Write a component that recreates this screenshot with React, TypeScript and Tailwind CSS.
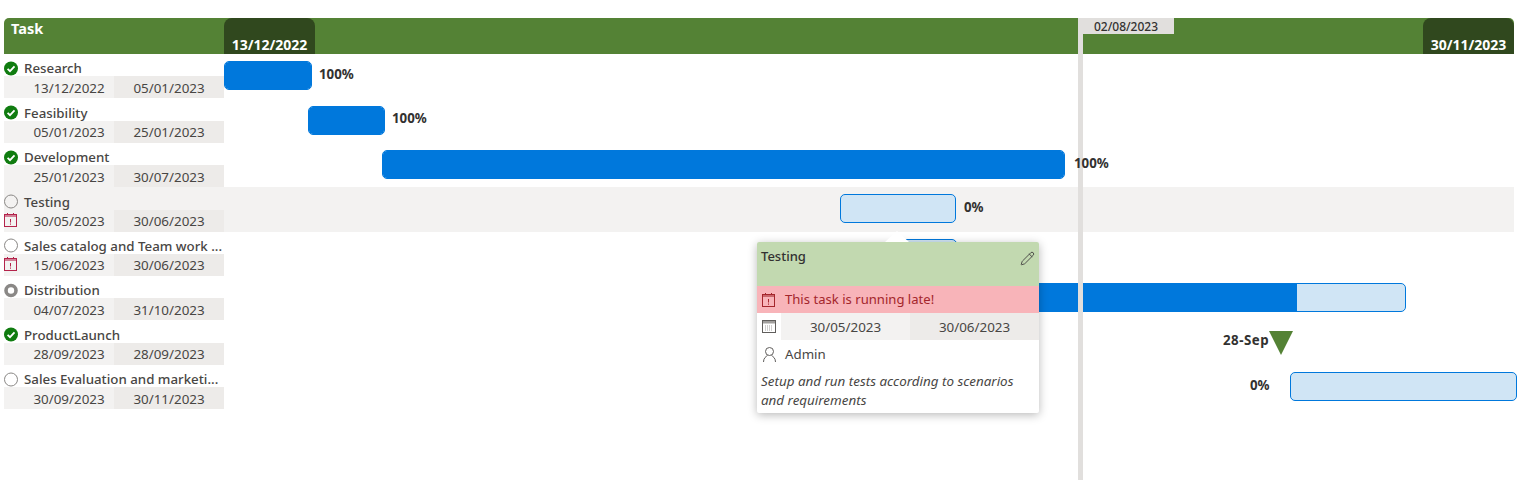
import { Pencil } from "lucide-react"

interface Task {
  name: string
  start: string
  end: string
  status: "done" | "todo" | "progress"
  late?: boolean
}

const tasks: Task[] = [
  { name: "Research", start: "13/12/2022", end: "05/01/2023", status: "done" },
  { name: "Feasibility", start: "05/01/2023", end: "25/01/2023", status: "done" },
  { name: "Development", start: "25/01/2023", end: "30/07/2023", status: "done" },
  { name: "Testing", start: "30/05/2023", end: "30/06/2023", status: "todo", late: true },
  { name: "Sales catalog and Team work ...", start: "15/06/2023", end: "30/06/2023", status: "todo", late: true },
  { name: "Distribution", start: "04/07/2023", end: "31/10/2023", status: "progress" },
  { name: "ProductLaunch", start: "28/09/2023", end: "28/09/2023", status: "done" },
  { name: "Sales Evaluation and marketi...", start: "30/09/2023", end: "30/11/2023", status: "todo" },
]

function StatusIcon({ status }: { status: Task["status"] }) {
  if (status === "done") {
    return (
      <svg width="15" height="15" viewBox="0 0 15 15" className="shrink-0">
        <circle cx="7" cy="7.5" r="7" fill="#107c10" />
        <path d="M3.6 7.8 L6 10.2 L10.5 5.4" fill="none" stroke="#fff" strokeWidth="1.8" />
      </svg>
    )
  }
  if (status === "progress") {
    return (
      <svg width="15" height="15" viewBox="0 0 15 15" className="shrink-0">
        <circle cx="7" cy="7.5" r="5" fill="#fff" stroke="#8a8886" strokeWidth="3.6" />
      </svg>
    )
  }
  return (
    <svg width="15" height="15" viewBox="0 0 15 15" className="shrink-0">
      <circle cx="7" cy="7.5" r="6.5" fill="none" stroke="#8a8886" strokeWidth="1" />
    </svg>
  )
}

function LateIcon({ color }: { color: string }) {
  return (
    <svg width="13" height="14" viewBox="0 0 13 14" className="shrink-0">
      <rect x="0.5" y="1.5" width="12" height="12" fill="none" stroke={color} />
      <rect x="1" y="2" width="11" height="2" fill={color} opacity="0.55" />
      <path d="M3.5 0 V2 M9.5 0 V2" stroke={color} />
      <path d="M6.5 6 V9.5 M6.5 10.5 V11.7" stroke={color} />
    </svg>
  )
}

function DateBand({ start, end, className = "", iconGap = false }: { start: string; end: string; className?: string; iconGap?: boolean }) {
  return (
    <div className={`flex h-[22px] items-center text-[13.4px] text-[#484644] ${className}`}>
      <div className={`flex h-full w-1/2 shrink-0 items-center justify-center bg-[#f3f2f1] pt-[1px] ${iconGap ? "pl-[20px]" : ""}`}>{start}</div>
      <div className="flex h-full w-1/2 shrink-0 items-center justify-center bg-[#edebe9] pt-[1px]">{end}</div>
    </div>
  )
}

function TaskCell({ task }: { task: Task }) {
  return (
    <div className="flex h-full w-[220px] shrink-0 flex-col justify-end">
      <div className="flex h-[16px] items-center gap-[5px] font-medium text-[#484644]">
        <StatusIcon status={task.status} />
        <span className="whitespace-nowrap text-[13.3px] leading-[16px]">{task.name}</span>
      </div>
      <div className="relative">
        <DateBand start={task.start} end={task.end} iconGap />
        {task.late && (
          <div className="absolute left-0 top-[3px]">
            <LateIcon color="#b4234b" />
          </div>
        )}
      </div>
    </div>
  )
}

function Bar({ width, progress = 0, className = "" }: { width: number; progress?: number; className?: string }) {
  return (
    <div
      className={`h-[29px] shrink-0 overflow-hidden rounded-[5px] border border-[#0078dc] bg-[#d0e5f5] ${className}`}
      style={{ width }}
    >
      <div className="h-full bg-[#0078dc]" style={{ width: `${progress}%` }} />
    </div>
  )
}

function Percent({ children, className = "" }: { children: string; className?: string }) {
  return <span className={`whitespace-nowrap text-[13.3px] font-bold text-[#323130] ${className}`}>{children}</span>
}

function Tooltip() {
  return (
    <div className="absolute left-[757px] top-[242px] z-20 w-[282px] rounded-[2px] bg-white shadow-[0_2px_10px_rgba(0,0,0,0.28)]">
      <div className="absolute left-[128px] top-[-11px] h-0 w-0 border-x-[12px] border-b-[11px] border-x-transparent border-b-white" />
      <div className="flex h-[44px] items-start justify-between rounded-t-[2px] bg-[#c2d9b0] pl-1 pr-[4px] pt-[5px] text-[13px] font-medium text-[#323130]">
        <span>Testing</span>
        <Pencil className="mt-[4px] h-[15px] w-[15px] text-[#484644]" strokeWidth={1.5} />
      </div>
      <div className="flex h-[27px] items-center gap-[10px] bg-[#f8b4b9] pl-[5px] pt-[1px] text-[13.1px] text-[#a4262c]">
        <LateIcon color="#a4262c" />
        <span>This task is running late!</span>
      </div>
      <div className="flex h-[27px] items-center">
        <div className="flex w-[24px] justify-center pr-[1px]">
          <svg width="14" height="13" viewBox="0 0 14 13">
            <rect x="0.5" y="0.5" width="13" height="12" fill="none" stroke="#605e5c" />
            <rect x="1" y="1" width="12" height="2.5" fill="#a19f9d" />
            <path d="M3 6 H11 M3 8 H11 M3 10 H11" stroke="#a19f9d" strokeDasharray="1 1" />
          </svg>
        </div>
        <DateBand start="30/05/2023" end="30/06/2023" className="h-full flex-1" />
      </div>
      <div className="flex h-[28px] items-center gap-[9px] pl-[6px] pt-[1px] text-[13.3px] text-[#484644]">
        <svg width="13" height="15" viewBox="0 0 13 15" fill="none" stroke="#605e5c">
          <circle cx="6.5" cy="4.5" r="4" />
          <path d="M0.5 15 C0.5 11 3 9.5 4.5 8.5 M12.5 15 C12.5 11 10 9.5 8.5 8.5" />
        </svg>
        <span>Admin</span>
      </div>
      <p className="px-1 pb-[3px] pt-[4px] text-[13.4px] italic leading-[19px] text-[#484644]">
        Setup and run tests according to scenarios and requirements
      </p>
    </div>
  )
}

export default function App() {
  return (
    <div className="relative h-[480px] w-[1532px] overflow-hidden bg-white pl-1 pt-[18px] font-['Noto_Sans',sans-serif]">
      <div className="w-[1510px]">
        <div className="flex h-9 justify-between rounded-t-[5px] bg-[#548235] text-white">
          <div className="w-[220px] pl-[7px] text-[14.5px] font-bold">Task</div>
          <div className="flex flex-1 justify-between">
            <div className="flex w-[91px] items-end justify-center rounded-t-lg bg-[#30481e] text-[14px] font-bold leading-[18px]">13/12/2022</div>
            <div className="flex w-[91px] items-end justify-center rounded-t-lg bg-[#30481e] text-[14px] font-bold leading-[18px]">30/11/2023</div>
          </div>
        </div>

        {tasks.map((task, i) => (
          <div key={task.name} className={`flex h-[44.4px] ${i === 3 ? "bg-[#f3f2f1]" : ""}`}>
            <TaskCell task={task} />
            <div className="flex flex-1 items-center pb-[1px]">
              {i === 0 && (
                <>
                  <Bar width={88} progress={100} />
                  <Percent className="-mt-[2px] ml-[7px]">100%</Percent>
                </>
              )}
              {i === 1 && (
                <>
                  <Bar width={77} progress={100} className="ml-[84px]" />
                  <Percent className="-mt-[2px] ml-[7px]">100%</Percent>
                </>
              )}
              {i === 2 && (
                <>
                  <Bar width={683} progress={100} className="ml-[158px]" />
                  <Percent className="z-10 -mt-[2px] ml-[9px]">100%</Percent>
                </>
              )}
              {i === 3 && (
                <>
                  <Bar width={116} className="ml-[616px]" />
                  <Percent className="-mt-[2px] ml-[8px]">0%</Percent>
                </>
              )}
              {i === 4 && <Bar width={58} className="ml-[675px]" />}
              {i === 5 && <Bar width={438} progress={75.2} className="ml-[744px]" />}
              {i === 6 && (
                <>
                  <Percent className="-mt-[2px] ml-[999px] w-[46px] tracking-[0.5px]">28-Sep</Percent>
                  <svg width="24" height="24" viewBox="0 0 24 24" className="mt-[1px] shrink-0">
                    <path d="M0 0 H24 L12 24 Z" fill="#548235" />
                  </svg>
                </>
              )}
              {i === 7 && (
                <>
                  <Percent className="ml-[1026px] w-[40px]">0%</Percent>
                  <Bar width={227} />
                </>
              )}
            </div>
          </div>
        ))}
      </div>

      <div className="pointer-events-none absolute bottom-0 left-[1078px] top-[18px] w-[5px] bg-[#e1dfdd]" />
      <div className="absolute left-[1078px] top-[18px] flex h-4 w-[96px] items-center justify-center bg-[#e1dfdd] pt-[1px] text-[12px] font-medium text-[#323130]">
        02/08/2023
      </div>

      <Tooltip />
    </div>
  )
}
